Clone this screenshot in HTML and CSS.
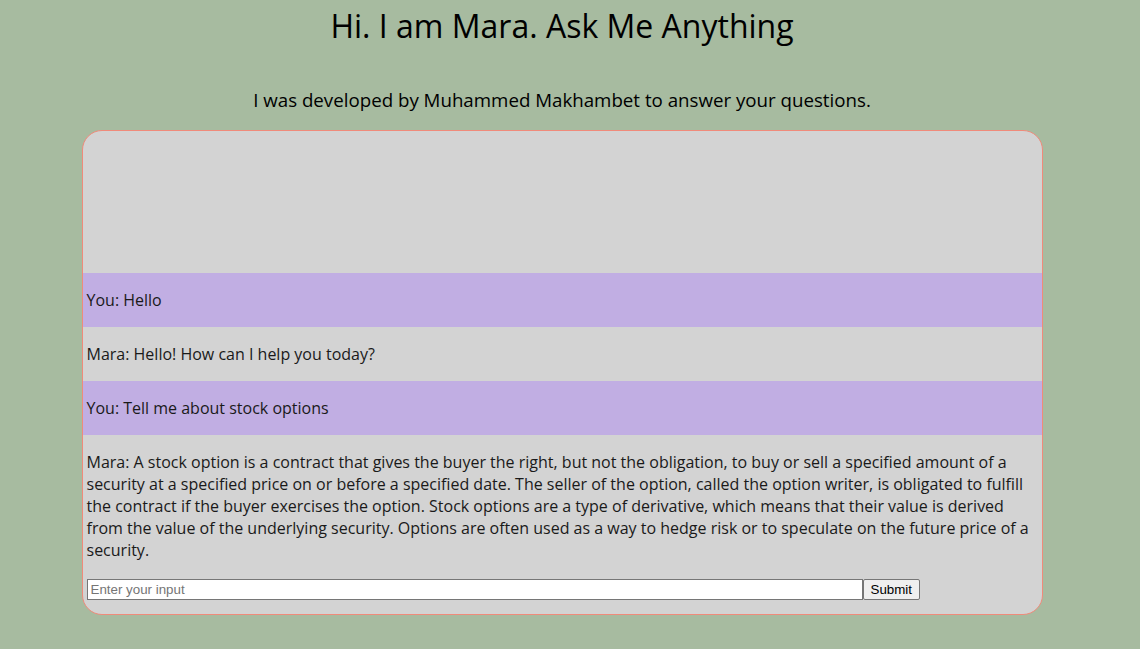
FILE: index.html
```html
<!DOCTYPE html>
<html lang="en">
<head>
<meta charset="utf-8">
<title>Mara</title>
<link rel="stylesheet" href="styles.css">
</head>
<body>
<div class="page">
  <h1 class="title">Hi. I am Mara. Ask Me Anything</h1>
  <p class="subtitle">I was developed by Muhammed Makhambet to answer your questions.</p>
  <div class="chat">
    <div class="messages">
      <div class="msg user">You: Hello</div>
      <div class="msg bot">Mara: Hello! How can I help you today?</div>
      <div class="msg user">You: Tell me about stock options</div>
      <div class="msg bot">Mara: A stock option is a contract that gives the buyer the right, but not the obligation, to buy or sell a specified amount of a security at a specified price on or before a specified date. The seller of the option, called the option writer, is obligated to fulfill the contract if the buyer exercises the option. Stock options are a type of derivative, which means that their value is derived from the value of the underlying security. Options are often used as a way to hedge risk or to speculate on the future price of a security.</div>
    </div>
    <form class="input-row">
      <input class="text-input" type="text" placeholder="Enter your input">
      <button class="submit" type="button">Submit</button>
    </form>
  </div>
</div>
</body>
</html>
```
FILE: styles.css
```css
html, body {
  margin: 0;
  padding: 0;
  background: #a7bba0;
}
.page {
  width: 1124px;
  font-family: "Open Sans", sans-serif;
  color: #000;
}
.title {
  margin: 4px 0 0;
  font-size: 32px;
  line-height: 44px;
  font-weight: 400;
  text-align: center;
}
.subtitle {
  margin: 39px 0 0;
  font-size: 18.72px;
  line-height: 25px;
  text-align: center;
}
.chat {
  box-sizing: border-box;
  width: 961px;
  height: 485px;
  margin: 18px auto 0;
  background: #d3d3d3;
  border: 1px solid #f08a7a;
  border-radius: 20px;
  display: flex;
  flex-direction: column;
  overflow: hidden;
}
.messages {
  flex: 1;
  display: flex;
  flex-direction: column;
  justify-content: flex-end;
}
.msg {
  padding: 16px 4px;
  font-size: 16px;
  line-height: 22px;
  color: #1a1a1a;
}
.msg.user {
  background: #c1aee3;
}
.input-row {
  display: flex;
  padding: 2px 4px 14px;
  margin: 0;
}
.text-input {
  box-sizing: border-box;
  width: 776px;
  height: 21px;
  margin: 0;
  padding: 1px 3px;
  border: 1px solid #767676;
  font-family: Arial, "Liberation Sans", sans-serif;
  font-size: 13.33px;
  background: #fff;
}
.text-input::placeholder {
  color: #757575;
}
.submit {
  box-sizing: border-box;
  height: 21px;
  margin: 0;
  padding: 1px 7px;
  border: 1px solid #767676;
  border-radius: 2px;
  background: #efefef;
  font-family: Arial, "Liberation Sans", sans-serif;
  font-size: 13.33px;
  color: #000;
}
```
